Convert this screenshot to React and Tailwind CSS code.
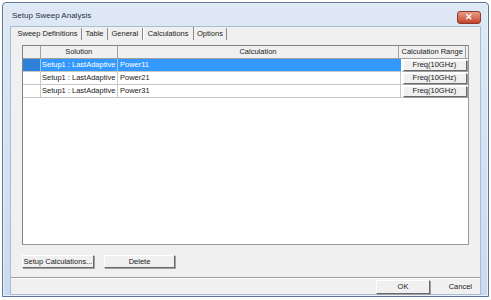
import React from "react";

const font = { fontFamily: '"Liberation Sans", Arial, sans-serif' };

function Btn({ children, className = "" }) {
  return (
    <div
      className={
        "flex items-center justify-center whitespace-nowrap bg-[#f0f0f0] border border-t-white border-l-white border-r-[#696969] border-b-[#696969] shadow-[1px_1px_0_#a0a0a0] text-[7.5px] text-[#222] " +
        className
      }
    >
      {children}
    </div>
  );
}

export default function App() {
  const rows = [
    { sol: "Setup1 : LastAdaptive", calc: "Power11", sel: true },
    { sol: "Setup1 : LastAdaptive", calc: "Power21" },
    { sol: "Setup1 : LastAdaptive", calc: "Power31" },
  ];
  const tabs = ["Sweep Definitions", "Table", "General", "Calculations", "Options"];
  return (
    <div className="w-[491px] h-[300px] bg-white pt-[2px] px-[2px] pb-[3px]" style={font}>
      <div className="w-full h-full flex flex-col border border-[#5a7596] rounded-t-[4px] bg-gradient-to-b from-[#dfe9f5] to-[#c9dbf0] shadow-[inset_0_0_0_1px_#e8f0fa]">
        <div className="h-[23px] flex items-center pl-[9px] pr-[7px] pt-[2px] shrink-0">
          <div className="text-[8px] text-[#1e2f45] flex-1 pt-[1px]">Setup Sweep Analysis</div>
          <div className="w-[24px] h-[13px] rounded-[3px] bg-gradient-to-b from-[#e99a85] to-[#c4432a] border border-[#8c3a2c] flex items-center justify-center text-white text-[9px] font-bold leading-none mt-[4px]">
            ✕
          </div>
        </div>
        <div className="flex-1 mx-[7px] mb-[1px] bg-[#f0f0f0] border border-[#a9bcd3] flex flex-col">
          {/* tabs */}
          <div className="flex items-end pl-[3px] h-[13px] text-[7.5px] text-[#222] whitespace-nowrap">
            {tabs.map((t) => (
              <div
                key={t}
                className={
                  "h-[12px] flex items-center border-r border-r-[#8a8a8a] " +
                  (t === "Calculations" ? "px-[4px] bg-[#f0f0f0] border-l border-l-white h-[13px]" : "px-[3.5px]")
                }
              >
                {t}
              </div>
            ))}
          </div>
          {/* panel */}
          <div className="flex flex-col px-[11px] pt-[5px]">
            <div className="h-[200px] bg-white border border-[#9a9a9a] border-t-[#828282] border-l-[#828282] flex flex-col text-[7.5px] text-[#222] whitespace-nowrap">
              <div className="flex h-[13px] bg-[#f0f0f0] border-b border-[#a0a0a0]">
                <div className="w-[18px] border-r border-[#a0a0a0]" />
                <div className="w-[77px] border-r border-[#a0a0a0] flex items-center justify-center">Solution</div>
                <div className="w-[283px] border-r border-[#a0a0a0] flex items-center justify-center">Calculation</div>
                <div className="w-[67px] border-r border-[#a0a0a0] flex items-center justify-center">Calculation Range</div>
                <div className="w-[2px]" />
              </div>
              {rows.map((r, i) => (
                <div key={i} className={"flex h-[13px] border-b border-[#c8c8c8] " + (r.sel ? "bg-[#3399ff]" : "")}>
                  <div className={"w-[18px] border-r " + (r.sel ? "bg-[#2f80d8] border-[#9ec9f4]" : "border-[#c8c8c8]")} />
                  <div className={"w-[77px] border-r flex items-center pl-[1px] overflow-hidden " + (r.sel ? "text-white border-[#9ec9f4]" : "border-[#c8c8c8]")}>
                    {r.sol}
                  </div>
                  <div className={"w-[283px] border-r flex items-center pl-[2px] " + (r.sel ? "text-white border-[#3399ff]" : "border-[#c8c8c8]")}>
                    {r.calc}
                  </div>
                  <div className="w-[67px] flex items-center justify-center bg-white">
                    <Btn className="w-[64px] h-[11px]">Freq(10GHz)</Btn>
                  </div>
                </div>
              ))}
            </div>
            <div className="flex gap-[10px] mt-[10px]">
              <Btn className="w-[72px] h-[13px]">Setup Calculations...</Btn>
              <Btn className="w-[71px] h-[13px]">Delete</Btn>
            </div>
          </div>
          <div className="h-[2px] border-t border-[#a0a0a0] border-b border-b-white mt-[9px]" />
          <div className="flex-1 flex items-center justify-end">
            <Btn className="w-[54px] h-[14px]">OK</Btn>
            <div className="w-[48px] h-[14px] flex items-center justify-end pr-[8px] text-[7.5px] text-[#222] ml-[2px]">Cancel</div>
          </div>
        </div>
      </div>
    </div>
  );
}
